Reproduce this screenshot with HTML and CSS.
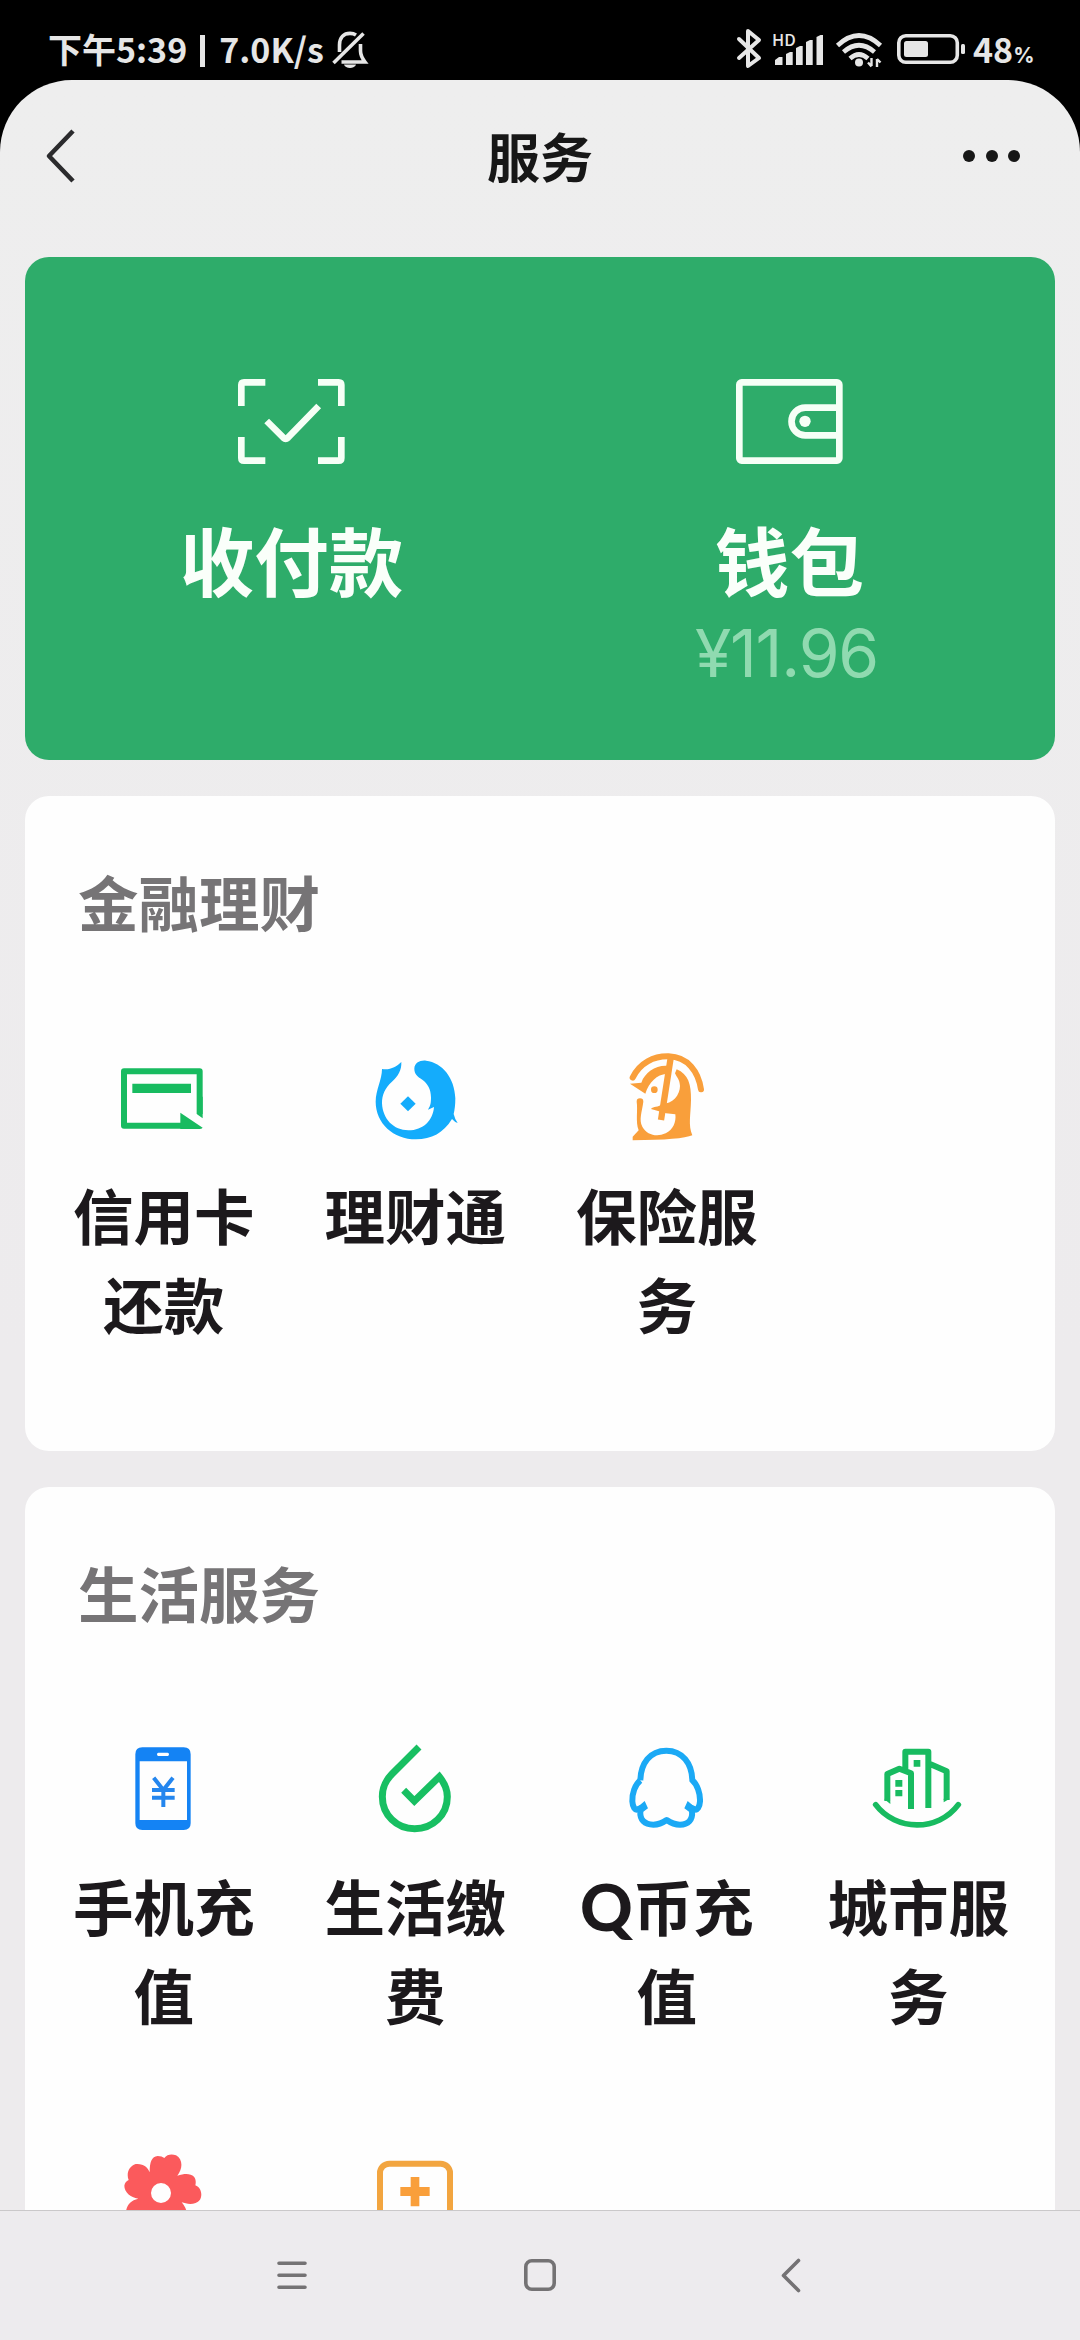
FILE: index.html
```html
<!DOCTYPE html>
<html lang="zh-CN">
<head>
<meta charset="utf-8">
<title>服务</title>
<link rel="stylesheet" href="styles.css">
</head>
<body>
<div class="phone">
  <div class="status">
    <div class="status-left">
      <span class="status-time">下午5:39</span><span class="status-sep"></span><span class="status-speed">7.0K/s</span>
      <svg class="bell" viewBox="0 0 36 38" width="36" height="38" fill="none" stroke="#e6e6e6" stroke-width="3.6">
        <path d="M7.5 21V14C7.500 6 12 2.400 18 2.400C20.500 2.400 22.500 3 24 4"/>
        <path d="M1.500 32L31.500 2.500"/>
        <path d="M28.500 13V20C28.500 24 30 27 33 31H9.500"/>
        <path d="M12 33.500H24C23 38 13 38 12 33.500Z" fill="#e6e6e6" stroke="none"/>
      </svg>
    </div>
    <div class="status-right">
      <svg class="bt" viewBox="736 29 25 40" width="25" height="40" fill="none" stroke="#e6e6e6" stroke-width="4" stroke-linejoin="round" stroke-linecap="round"><path d="M738 39L758 58L747 66V31L758 40L738 58"/></svg>
      <div class="signal">
        <span class="hd">HD</span>
        <svg viewBox="774 35 49 30" width="49" height="30" fill="#e6e6e6"><path d="M774 65V60L778 57H781.500V65ZM785 65V54L789 52H791.700V65ZM795 65V48L799 46H801.700V65ZM805 65V42L809 40H811.700V65ZM815.500 65V37L819.500 35H822V65Z"/></svg>
      </div>
      <svg class="wifi" viewBox="835 33 47 36" width="47" height="36" fill="none" stroke="#e6e6e6" stroke-width="4.600">
        <path d="M836.500 45.500Q858 25.500 879.500 45.500M842.500 52Q858 38.500 873.500 52M849 58.500Q858 50.500 867 58.500"/>
        <circle cx="858" cy="62.500" r="4" fill="#e6e6e6" stroke="none"/>
        <path d="M870.500 58V66M867 62.500L870.500 66.500M876 67V59M876 59L879.500 62.500" stroke-width="2.400"/>
      </svg>
      <svg class="battery" viewBox="896 34 68 30" width="68" height="30">
        <rect x="897.800" y="35.800" width="58.500" height="26.500" rx="7" fill="none" stroke="#e6e6e6" stroke-width="3.600"/>
        <rect x="903" y="41" width="24" height="16" rx="2.500" fill="#e6e6e6"/>
        <rect x="960" y="44" width="4" height="10" rx="1.500" fill="#e6e6e6"/>
      </svg>
      <span class="level">48<small>%</small></span>
    </div>
  </div>

  <div class="screen">
    <header class="header">
      <svg viewBox="0 0 32 54" width="32" height="54" fill="none" stroke="#2b2b2d" stroke-width="4.600" stroke-linejoin="round"><path d="M29 2L5 27L29 52"/></svg>
      <h1>服务</h1>
      <div class="dots"><i></i><i></i><i></i></div>
    </header>

    <main class="content">
      <section class="pay">
        <div class="pay-item">
          <svg viewBox="264 117 321 255" width="107" height="85" fill="none" stroke="#f6fff6" stroke-width="20">
            <path d="M274 198V135Q274 127 282 127H346M504 127H566Q574 127 574 135V198M574 291V354Q574 362 566 362H504M346 362H282Q274 362 274 354V291"/>
            <path d="M350 243L400 293Q407 299 414 293L506 198"/>
          </svg>
          <b>收付款</b>
        </div>
        <div class="pay-item">
          <svg viewBox="226 117 321 255" width="107" height="85" fill="none" stroke="#f6fff6" stroke-width="20">
            <rect x="236" y="127" width="300" height="235" rx="7"/>
            <path d="M530 203H434A41 41 0 0 0 434 286H530"/>
            <circle cx="433" cy="244" r="17" fill="#f6fff6" stroke="none"/>
          </svg>
          <b>钱包</b>
          <span class="balance">¥11.96</span>
        </div>
      </section>

      <section class="card">
        <h2>金融理财</h2>
        <div class="grid">
          <div class="item">
            <svg class="ico" viewBox="165 639 288 288" fill="#18bb60">
              <path d="M419 822V694H192V857H366" fill="none" stroke="#18bb60" stroke-width="18" stroke-linejoin="round"/>
              <path d="M217 731H393V759H217ZM411 770H428V835L411 823ZM361 818L428 863Q425 867 418 867H361Z"/>
            </svg>
            <p>信用卡还款</p>
          </div>
          <div class="item">
            <svg class="ico" viewBox="18 39 288 288" fill="#14acfc">
              <path d="M163 86C163 69 180 60 198 62C247 68 284 113 286 175C286 195 284 210 281 222Q284 236 293 249Q284 246 276 237C250 279 215 298 168 298C100 298 47 250 47 185C47 150 66 120 66 87C90 91 108 81 124 66C125 90 115 108 95 126C75 144 66 165 66 190C68 237 101 271 145 271C190 271 219 241 222 201L204 209C212 197 213 188 213 172C213 147 203 131 187 119C172 110 163 101 163 86Z"/>
              <path d="M144 169L167 191L144 214L121 191Z"/>
            </svg>
            <p>理财通</p>
          </div>
          <div class="item">
            <svg class="ico" viewBox="174 69 288 288" fill="#f99f3b">
              <path d="M218 143C239 99 281 78 326 79C384 81 415 125 423 178" fill="none" stroke="#f99f3b" stroke-width="18" stroke-linecap="round"/>
              <path d="M332 84L303 270" fill="none" stroke="#f99f3b" stroke-width="19"/>
              <path d="M210 161L244 158C255 127 289 104 325 108L320 131C291 134 267 155 256 191Z"/>
              <circle cx="283" cy="179" r="10"/>
              <path d="M350 118C385 133 394 163 393 210C392 258 384 285 397 316Q365 330 218 331V320L236 301C226 275 234 240 230 215A10 10 0 0 1 250 215C246 245 236 269 247 290C261 315 290 322 317 310C339 300 349 276 346 253L318 250L273 237C280 228 295 233 305 222C338 222 360 195 360 168C359 149 351 143 345 130Z"/>
            </svg>
            <p>保险服务</p>
          </div>
        </div>
      </section>

      <section class="card">
        <h2>生活服务</h2>
        <div class="grid">
          <div class="item">
            <svg class="ico" viewBox="165 72 288 288">
              <path fill="#1483f4" fill-rule="evenodd" d="M247 82H371Q392 82 392 103V310Q392 330 371 330H247Q226 330 226 310V103Q226 82 247 82ZM239 124V300H381V124ZM295 98Q291 98 291 103T295 108H323Q327 108 327 103T323 98Z"/>
              <path d="M281 173L310 210L339 173M276 210H344M276 233H344M310 207V261" fill="none" stroke="#2486ee" stroke-width="12"/>
            </svg>
            <p>手机充值</p>
          </div>
          <div class="item">
            <svg class="ico" viewBox="918 72 288 288" fill="none" stroke="#18bf62" stroke-width="21">
              <path d="M1077 81L996 162C975 184 967 202 967 230C967 284 1010 326 1064 326C1118 326 1162 284 1162 230C1162 209 1154 190 1138 170L1063 243L1031 211"/>
            </svg>
            <p>生活缴费</p>
          </div>
          <div class="item">
            <svg class="ico" viewBox="174 72 288 288" fill="none" stroke="#1ba9f5" stroke-width="18" stroke-linejoin="round">
              <path d="M241 181C242 130 270 92 319 92C367 92 396 130 397 181C412 194 421 220 420 244C419 260 412 273 403 267L386 260"/>
              <path d="M241 181C225 194 216 220 217 244C218 260 225 273 235 267L252 260" />
              <path d="M241 273C239 300 254 314 280 314C300 314 310 307 320 300C330 307 340 314 360 314C384 314 399 300 396 273"/>
              <path d="M254 243L264 265L245 279L232 262ZM383 243L373 265L392 279L405 262Z" fill="#1ba9f5" stroke="none"/>
            </svg>
            <p><span class="latin">Q</span>币充值</p>
          </div>
          <div class="item">
            <svg class="ico" viewBox="927 72 288 288" fill="none" stroke="#18bb60" stroke-width="18">
              <path d="M947 254C1007 334 1134 336 1195 254" stroke-width="17" stroke-linecap="round"/>
              <path d="M1053 267V160L1018 146L982 162V243M1036 150V95H1105V264M1105 130L1160 154V240" stroke-linejoin="round"/>
              <path d="M1006 180H1027V200H1006ZM1006 210H1027V229H1006ZM1061 120H1081V140H1061ZM973 236L991 244V252L973 238ZM1151 236H1169L1151 247Z" fill="#18bb60" stroke="none"/>
            </svg>
            <p>城市服务</p>
          </div>
          <div class="item">
            <svg class="ico" viewBox="165 72 288 288" fill="#fb5a5c">
              <path fill-rule="evenodd" d="M269 160C269 130 275 112 293 111Q306 111 313 117C321 105 337 104 348 109C370 121 368 150 352 170C375 162 392 163 402 173C408 181 408 189 406 199C424 206 428 228 420 242C407 259 382 256 365 250C377 265 381 276 381 290H197C197 262 208 245 235 239C211 235 193 219 193 200Q195 188 206 183C198 164 207 141 227 135C251 133 264 145 269 160ZM303 192A30 30 0 1 0 303 252A30 30 0 1 0 303 192Z"/>
            </svg>
          </div>
          <div class="item">
            <svg class="ico" viewBox="918 72 288 288">
              <rect x="960" y="134" width="210" height="210" rx="28" fill="none" stroke="#f2a540" stroke-width="18"/>
              <path d="M1052 174H1078V204H1109V231H1078V262H1052V231H1021V204H1052Z" fill="#f99f3b"/>
            </svg>
          </div>
        </div>
      </section>
    </main>
  </div>

  <nav class="nav">
    <svg viewBox="0 0 48 48" width="48" height="48" stroke="#747274" stroke-width="3.600" stroke-linecap="round"><path d="M11 12.200H37M11 24.200H37M11 36.200H37"/></svg>
    <svg viewBox="0 0 48 48" width="48" height="48" fill="none" stroke="#747274" stroke-width="3.600"><rect x="9.800" y="9.800" width="28.400" height="28.400" rx="6"/></svg>
    <svg viewBox="0 0 48 48" width="48" height="48" fill="none" stroke="#747274" stroke-width="3.600" stroke-linecap="round" stroke-linejoin="round"><path d="M33.500 9.500L18.500 24.500L33.500 39.500"/></svg>
  </nav>
</div>
</body>
</html>
```
FILE: styles.css
```css
* { box-sizing: border-box; margin: 0; padding: 0; }

body {
  width: 1080px;
  height: 2340px;
  overflow: hidden;
  background: #000;
  font-family: "Noto Sans CJK SC", sans-serif;
}

svg { display: block; flex: none; overflow: visible; }

.phone { display: flex; flex-direction: column; height: 2340px; }

.status {
  display: flex;
  justify-content: space-between;
  height: 80px;
  padding: 0 46px 0 48px;
  color: #e6e6e6;
  font-size: 34px;
  font-weight: 700;
  line-height: 50px;
}
.status-left, .status-right { display: flex; padding-top: 24px; }
.status-sep { width: 5px; height: 32px; margin: 11px 14px 0 13px; background: #e6e6e6; }
.bell { margin: 7px 0 0 8px; }
.bt { margin: 5px 11px 0 0; }
.signal { display: grid; width: 51px; margin-right: 12px; }
.signal > * { grid-area: 1 / 1; }
.signal svg { margin: 11px 0 0 2px; }
.hd { font-size: 16.500px; line-height: 16px; margin: 7px 0 0 -1px; font-weight: 500; }
.wifi { margin: 9px 14px 0 0; }
.battery { margin: 10px 8px 0 0; }
.level { width: 61px; white-space: nowrap; }
.level small { font-family: Inter, sans-serif; font-size: 21px; font-weight: 700; line-height: 1; }

.screen {
  flex: 1;
  min-height: 0;
  overflow: hidden;
  border-radius: 72px 72px 0 0;
  background: linear-gradient(#eee, #edebed 60%);
}

.header {
  display: grid;
  grid-template-columns: 1fr auto 1fr;
  align-items: center;
  height: 154px;
  padding: 0 60px 3px 44px;
}
.header h1 { margin-top: -2px; font-size: 53px; line-height: 70px; color: #171717; padding-left: 16px; }
.dots { display: flex; justify-content: flex-end; gap: 10.500px; }
.dots i { width: 12px; height: 12px; border-radius: 50%; background: #171717; }

.content { display: flex; flex-direction: column; gap: 36px; padding: 23px 25px 0; }

.pay {
  display: grid;
  grid-template-columns: 1fr 1fr;
  height: 503px;
  padding: 122px 17px 0;
  border-radius: 24px;
  background: #2eac6a;
}
.pay-item { display: flex; flex-direction: column; align-items: center; color: #fafffa; }
.pay-item b { margin-top: 50px; padding-left: 1px; font-size: 74.500px; line-height: 90px; }
.balance {
  margin-top: 4px;
  font-family: Inter, sans-serif;
  font-size: 66px;
  line-height: 90px;
  letter-spacing: -1.200px;
  margin-left: -5px;
  color: #90dab0;
}

.card { height: 655px; padding: 60px 12px 0; border-radius: 24px; background: #fefefe; }
.card:last-child { height: 900px; }
.card h2 { padding-left: 41px; font-size: 60.500px; line-height: 90px; font-weight: 700; color: #767476; }
.grid { display: grid; grid-template-columns: repeat(4, 1fr); row-gap: 103px; margin-top: 107px; }
.item { display: flex; flex-direction: column; align-items: center; color: #1c191c; }
.ico { width: 96px; height: 96px; }
.item p {
  width: 200px;
  height: 178px;
  margin: 20px 0 2px;
  padding-left: 2px;
  font-size: 60.500px;
  line-height: 89px;
  font-weight: 700;
  text-align: center;
}
.latin { font-family: Lato, sans-serif; font-size: 65px; font-weight: 900; line-height: 1; }

.nav {
  display: flex;
  justify-content: center;
  gap: 200.500px;
  height: 130px;
  padding-top: 40px;
  border-top: 1px solid #cac8ca;
  background: #edebee;
}
```
